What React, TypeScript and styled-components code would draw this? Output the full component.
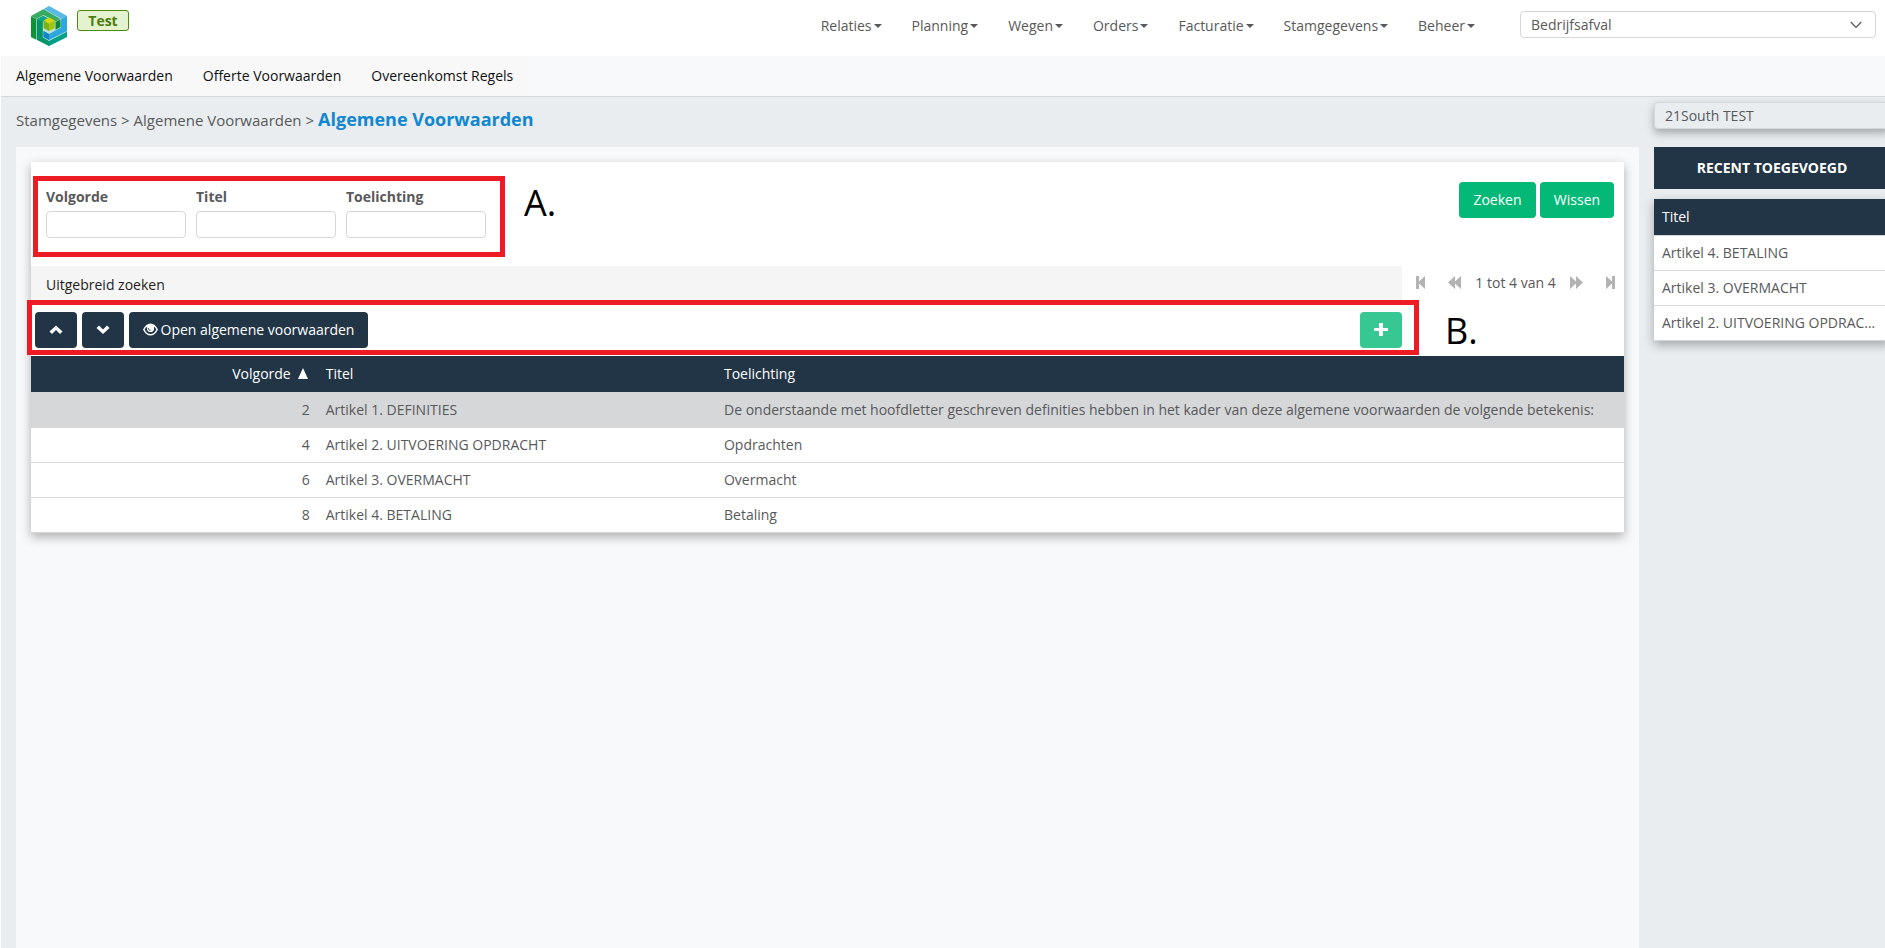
import React from 'react';
import styled, { createGlobalStyle } from 'styled-components';

const colors = {
  text: '#58595b',
  navy: '#213546',
  green: '#04b978',
  line: '#d6d7d9',
  page: '#e9edf0',
  panel: '#f8f9fb',
  marker: '#ed1c24',
};

const GlobalStyle = createGlobalStyle`
  *, *::before, *::after { box-sizing: border-box; }
  body {
    margin: 0;
    background: #fff;
    color: ${colors.text};
    font: 14px/20px 'Open Sans', 'Noto Sans', sans-serif;
  }
  button, input, select { font: inherit; color: inherit; }
  a { color: inherit; text-decoration: none; }
`;

const Page = styled.div`
  min-height: 100vh;
  display: flex;
  flex-direction: column;
  overflow: hidden;
`;

const TopBar = styled.header`
  display: flex;
  align-items: flex-start;
  height: 56px;
  padding: 0 9px 0 31px;
`;

const Logo = styled.svg`
  width: 36px;
  height: 40px;
  margin-top: 6px;
`;

const EnvBadge = styled.span`
  margin: 10px auto 0 10px;
  width: 52px;
  border: 1px solid #4f8a10;
  border-radius: 3px;
  background: #e4f3cf;
  color: #4a7d10;
  font-weight: 700;
  line-height: 19px;
  text-align: center;
`;

const MainNav = styled.nav`
  display: flex;
  gap: 30px;
  margin: 16px 45px 0 0;
`;

const NavItem = styled.a`
  display: flex;
  align-items: center;
  gap: 2px;

  &::after {
    content: '';
    border-top: 4px solid ${colors.text};
    border-left: 4px solid transparent;
    border-right: 4px solid transparent;
  }
`;

const SelectWrap = styled.div`
  display: grid;
  width: 356px;
  margin-top: 11px;
  align-items: center;

  select, svg { grid-area: 1 / 1; }
  svg { justify-self: end; margin-right: 14px; pointer-events: none; }
`;

const Select = styled.select`
  appearance: none;
  height: 27px;
  padding: 0 10px;
  border: 1px solid ${colors.line};
  border-radius: 4px;
  background: #fff;
`;

const SubBar = styled.nav`
  height: 41px;
  margin-left: 1px;
  border-bottom: 1px solid ${colors.line};
  background: ${colors.panel};
`;

const SubList = styled.ul`
  display: inline-flex;
  height: 40px;
  margin: 0;
  padding: 0;
  list-style: none;
  background: #f8f8f8;
`;

const SubLink = styled.a`
  display: block;
  padding: 10px 15px;
  color: #111;
`;

const Body = styled.div`
  flex: 1;
  display: flex;
  gap: 15px;
  margin-left: 1px;
  padding-left: 15px;
  background: ${colors.page};
`;

const Main = styled.main`
  flex: 1;
  min-width: 0;
  display: flex;
  flex-direction: column;
`;

const Crumbs = styled.div`
  display: flex;
  align-items: baseline;
  gap: 4px;
  height: 50px;
  padding-top: 10px;
  font-size: 15px;
`;

const Title = styled.h1`
  margin: 0;
  color: #1287d0;
  font-size: 18px;
  font-weight: 700;
  line-height: 24px;
`;

const Panel = styled.div`
  flex: 1;
  padding: 15px;
  background: ${colors.panel};
`;

const Card = styled.section`
  background: #fff;
  box-shadow: 0 4px 10px rgba(0, 0, 0, 0.3);
`;

const SearchForm = styled.form`
  display: flex;
  align-items: flex-start;
  padding: 14px 10px 9px 2px;
`;

const FieldGroup = styled.div`
  display: flex;
  gap: 10px;
  padding: 6px 14px 14px 8px;
  border: 5px solid ${colors.marker};
`;

const Field = styled.label`
  display: flex;
  flex-direction: column;
  gap: 4px;
  font-weight: 700;
`;

const Input = styled.input`
  width: 140px;
  height: 27px;
  border: 1px solid ${colors.line};
  border-radius: 4px;
  background: #fff;
`;

const Letter = styled.span`
  color: #000;
  font-size: 36px;
  line-height: 40px;
`;

const LetterA = styled(Letter)`
  margin: 7px auto 0 19px;
`;

const LetterB = styled(Letter)`
  align-self: flex-start;
  margin-left: 43px;
`;

const FormActions = styled.div`
  display: flex;
  gap: 4px;
  margin-top: 6px;
`;

const Button = styled.button<{ $tone: 'navy' | 'green' | 'mint'; $width: number }>`
  display: flex;
  align-items: center;
  justify-content: center;
  gap: 3px;
  width: ${(p) => p.$width}px;
  height: 36px;
  padding: 0;
  border: 0;
  border-radius: 4px;
  color: #fff;
  background: ${(p) => ({ navy: colors.navy, green: colors.green, mint: '#37c793' })[p.$tone]};
  cursor: pointer;
`;

const ListHead = styled.div`
  display: flex;
`;

const ListTools = styled.div`
  flex: 1;
`;

const AdvancedToggle = styled.button`
  display: block;
  width: 100%;
  height: 38px;
  padding: 0 15px;
  border: 0;
  background: #f5f5f5;
  color: #222;
  text-align: left;
`;

const Toolbar = styled.div`
  position: relative;
  display: flex;
  gap: 5px;
  padding: 8px 0 8px 4px;

  & > :last-child { margin-left: auto; }

  &::before {
    content: '';
    position: absolute;
    inset: -4px -17px 1px -4px;
    border: 5px solid ${colors.marker};
    pointer-events: none;
  }
`;

const ListSide = styled.div`
  display: flex;
  flex-direction: column;
  width: 222px;
  gap: 12px;
`;

const Pager = styled.div`
  display: flex;
  align-items: center;
  justify-content: space-between;
  height: 33px;
  padding: 0 9px 0 14px;
`;

const PagerGroup = styled.div`
  display: flex;
  align-items: center;
  gap: 14px;
`;

const PagerButton = styled.button`
  display: flex;
  padding: 0;
  border: 0;
  background: none;
  color: #b3b3b3;
`;

const Table = styled.table`
  width: 100%;
  border-collapse: separate;
  border-spacing: 0;
  table-layout: fixed;
`;

const HeadCell = styled.th<{ $width?: string; $align?: 'left' | 'right' }>`
  width: ${(p) => p.$width ?? 'auto'};
  height: 37px;
  padding: 0 8px;
  border-bottom: 1px solid ${colors.line};
  background: ${colors.navy};
  color: #fff;
  font-weight: 400;
  text-align: ${(p) => p.$align ?? 'left'};
`;

const Cell = styled.td<{ $selected?: boolean; $align?: 'left' | 'right' }>`
  height: 35px;
  padding: 0 8px;
  overflow: hidden;
  border-bottom: 1px solid ${colors.line};
  background: ${(p) => (p.$selected ? colors.line : '#fff')};
  text-align: ${(p) => p.$align ?? 'left'};
  text-overflow: ellipsis;
  white-space: nowrap;
`;

const SortMark = styled.svg`
  width: 10px;
  height: 11px;
  margin: 0 2px 0 7px;
`;

const Aside = styled.aside`
  width: 236px;
  margin-right: -5px;
  padding-top: 5px;
`;

const Company = styled.input`
  display: block;
  width: 100%;
  height: 27px;
  padding: 0 10px;
  border: 1px solid ${colors.line};
  border-radius: 4px;
  background: ${colors.page};
  box-shadow: 0 4px 8px rgba(0, 0, 0, 0.3);
`;

const AsideTitle = styled.h2`
  margin: 18px 0 10px;
  background: ${colors.navy};
  color: #fff;
  font-size: 14px;
  font-weight: 700;
  line-height: 42px;
  text-align: center;
  text-transform: uppercase;
`;

const navItems = ['Relaties', 'Planning', 'Wegen', 'Orders', 'Facturatie', 'Stamgegevens', 'Beheer'];
const subItems = ['Algemene Voorwaarden', 'Offerte Voorwaarden', 'Overeenkomst Regels'];
const fields = ['Volgorde', 'Titel', 'Toelichting'];
const recent = ['Artikel 4. BETALING', 'Artikel 3. OVERMACHT', 'Artikel 2. UITVOERING OPDRACHT'];
const articles = [
  {
    order: 2,
    title: 'Artikel 1. DEFINITIES',
    note: 'De onderstaande met hoofdletter geschreven definities hebben in het kader van deze algemene voorwaarden de volgende betekenis:',
  },
  { order: 4, title: 'Artikel 2. UITVOERING OPDRACHT', note: 'Opdrachten' },
  { order: 6, title: 'Artikel 3. OVERMACHT', note: 'Overmacht' },
  { order: 8, title: 'Artikel 4. BETALING', note: 'Betaling' },
];

const BrandLogo = () => (
  <Logo viewBox="0 0 36 40" role="img" aria-label="Logo">
    <path d="M18 0 36 10V31L18 40 0 31V10Z" fill="#b9e3d8" />
    <path d="M18 0 36 10 31 13 13 3Z" fill="#5bb9e8" />
    <path d="M36 10V25L18 34 12.500 31 12.500 25 18 28 30 21.500V13.500Z" fill="#2ea7df" />
    <path d="M12.500 25 18 28V34L12.500 31Z" fill="#0f86c8" />
    <path d="M0 10 12.500 3.300 29.500 13 24.500 15.500 12.500 9 5 13Z" fill="#3aa960" />
    <path d="M24.500 16 29.500 13.500V21L24.500 23.700Z" fill="#0c8a3a" />
    <path d="M0 10.500 5 13V33.500L0 31Z" fill="#119136" />
    <path d="M5.700 13.200 12.200 10 17 12.500 11.800 15.500V31.400L18 35V40L5.700 33.800Z" fill="#069365" />
    <path d="M5.700 13.200 12.200 10 22 15 11.800 15.500Z" fill="#13a58c" />
    <path d="M18 35 36 25.800V31L18 40Z" fill="#009f8a" />
    <path d="M12.500 14.500 18 11.500 23.800 14.500 18 17.500Z" fill="#d2d80b" />
    <path d="M12.500 14.500 18 17.500V25L12.500 22Z" fill="#76b41c" />
    <path d="M23.800 14.500 18 17.500V25L23.800 22Z" fill="#a5c40f" />
  </Logo>
);

const Chevron = ({ down = false }: { down?: boolean }) => (
  <svg width="14" height="14" viewBox="0 0 14 14" aria-hidden="true">
    <path
      d={down ? 'M3 2.500 7 6.500 11 2.500 13.500 5 7 11 .500 5Z' : 'M3 11 7 7 11 11 13.500 8.500 7 2.500 .500 8.500Z'}
      fill="currentColor"
    />
  </svg>
);

const EyeIcon = () => (
  <svg width="15" height="14" viewBox="0 0 15 14" aria-hidden="true">
    <path
      fillRule="evenodd"
      d="M0 6.500C2 2.500 4.500 .500 7.500 .500S13 2.500 15 6.500C13 10.500 10.500 12.500 7.500 12.500S2 10.500 0 6.500ZM4.200 3.500C2.900 4.300 2.200 5.300 1.700 6.500 3 9.500 5 11 7.500 11S12 9.500 13.300 6.500C12.800 5.300 12.100 4.300 10.800 3.500 11.800 7 10 9 7.500 9S3.200 7 4.200 3.500Z"
      fill="currentColor"
    />
    <circle cx="7.500" cy="5" r="3.500" fill="currentColor" />
    <path d="M5.300 5.200C5.300 6.600 6.300 7.400 7.500 7.300" stroke="#213546" fill="none" />
  </svg>
);

const PlusIcon = () => (
  <svg width="14" height="14" viewBox="0 0 14 14" aria-hidden="true">
    <path d="M5 0h4v5h5v3h-5v5h-4v-5h-5v-3h5Z" fill="currentColor" />
  </svg>
);

const StepIcon = ({ next = false }: { next?: boolean }) => (
  <svg width="9" height="13" viewBox="0 0 9 13" aria-hidden="true">
    <path d={next ? 'M0 0 6 5.500V0H9V13H6V7.500L0 13Z' : 'M9 0 3 5.500V0H0V13H3V7.500L9 13Z'} fill="currentColor" />
  </svg>
);

const SkipIcon = ({ next = false }: { next?: boolean }) => (
  <svg width="13" height="13" viewBox="0 0 13 13" aria-hidden="true">
    <path
      d={next ? 'M0 0 6 5.500V0L13 6.500 6 13V7.500L0 13Z' : 'M13 0 7 5.500V0L0 6.500 7 13V7.500L13 13Z'}
      fill="currentColor"
    />
  </svg>
);

export default function App() {
  return (
    <>
      <GlobalStyle />
      <Page>
        <TopBar>
          <BrandLogo />
          <EnvBadge>Test</EnvBadge>
          <MainNav>
            {navItems.map((item) => (
              <NavItem href="#" key={item}>{item}</NavItem>
            ))}
          </MainNav>
          <SelectWrap>
            <Select aria-label="Afvalsoort" defaultValue="Bedrijfsafval">
              <option>Bedrijfsafval</option>
            </Select>
            <svg width="12" height="8" viewBox="0 0 12 8" aria-hidden="true">
              <path d="M.700 1 6 6.500 11.300 1" fill="none" stroke="#555" strokeWidth="1.200" />
            </svg>
          </SelectWrap>
        </TopBar>
        <SubBar>
          <SubList>
            {subItems.map((item) => (
              <li key={item}><SubLink href="#">{item}</SubLink></li>
            ))}
          </SubList>
        </SubBar>
        <Body>
          <Main>
            <Crumbs>
              <span>Stamgegevens &gt; Algemene Voorwaarden &gt;</span>
              <Title>Algemene Voorwaarden</Title>
            </Crumbs>
            <Panel>
              <Card>
                <SearchForm onSubmit={(e) => e.preventDefault()}>
                  <FieldGroup>
                    {fields.map((name) => (
                      <Field key={name}>
                        {name}
                        <Input type="text" name={name} />
                      </Field>
                    ))}
                  </FieldGroup>
                  <LetterA>A.</LetterA>
                  <FormActions>
                    <Button type="submit" $tone="green" $width={77}>Zoeken</Button>
                    <Button type="reset" $tone="green" $width={74}>Wissen</Button>
                  </FormActions>
                </SearchForm>
                <ListHead>
                  <ListTools>
                    <AdvancedToggle type="button">Uitgebreid zoeken</AdvancedToggle>
                    <Toolbar>
                      <Button type="button" $tone="navy" $width={42} aria-label="Omhoog"><Chevron /></Button>
                      <Button type="button" $tone="navy" $width={42} aria-label="Omlaag"><Chevron down /></Button>
                      <Button type="button" $tone="navy" $width={239}>
                        <EyeIcon />
                        Open algemene voorwaarden
                      </Button>
                      <Button type="button" $tone="mint" $width={42} aria-label="Toevoegen"><PlusIcon /></Button>
                    </Toolbar>
                  </ListTools>
                  <ListSide>
                    <Pager>
                      <PagerButton type="button" aria-label="Eerste"><StepIcon /></PagerButton>
                      <PagerGroup>
                        <PagerButton type="button" aria-label="Vorige"><SkipIcon /></PagerButton>
                        <span>1 tot 4 van 4</span>
                        <PagerButton type="button" aria-label="Volgende"><SkipIcon next /></PagerButton>
                      </PagerGroup>
                      <PagerButton type="button" aria-label="Laatste"><StepIcon next /></PagerButton>
                    </Pager>
                    <LetterB>B.</LetterB>
                  </ListSide>
                </ListHead>
                <Table>
                  <thead>
                    <tr>
                      <HeadCell $width="18%" $align="right">
                        Volgorde
                        <SortMark viewBox="0 0 10 11" aria-hidden="true">
                          <path d="M5 0 10 11H0Z" fill="#fff" />
                        </SortMark>
                      </HeadCell>
                      <HeadCell $width="25%">Titel</HeadCell>
                      <HeadCell>Toelichting</HeadCell>
                    </tr>
                  </thead>
                  <tbody>
                    {articles.map((row, i) => (
                      <tr key={row.order}>
                        <Cell $selected={i === 0} $align="right">{row.order}</Cell>
                        <Cell $selected={i === 0}>{row.title}</Cell>
                        <Cell $selected={i === 0}>{row.note}</Cell>
                      </tr>
                    ))}
                  </tbody>
                </Table>
              </Card>
            </Panel>
          </Main>
          <Aside>
            <Company aria-label="Bedrijf" readOnly value="21South TEST" />
            <AsideTitle>Recent toegevoegd</AsideTitle>
            <Card>
              <Table>
                <thead>
                  <tr><HeadCell>Titel</HeadCell></tr>
                </thead>
                <tbody>
                  {recent.map((title) => (
                    <tr key={title}><Cell>{title}</Cell></tr>
                  ))}
                </tbody>
              </Table>
            </Card>
          </Aside>
        </Body>
      </Page>
    </>
  );
}
